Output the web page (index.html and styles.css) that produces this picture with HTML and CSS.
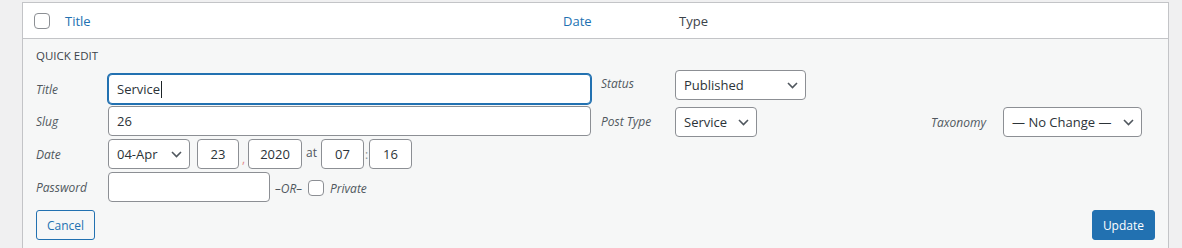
FILE: index.html
```html
<!DOCTYPE html>
<html lang="en">
<head>
    <meta charset="UTF-8">
    <title>Quick Edit</title>
    <link rel="stylesheet" href="styles.css">
</head>
<body>
    <div class="list-table">
        <!-- Column headers -->
        <div class="list-head">
            <div class="col-cb"><span class="checkbox"></span></div>
            <div class="col-title"><a href="#">Title</a></div>
            <div class="col-date"><a href="#">Date</a></div>
            <div class="col-type">Type</div>
        </div>

        <!-- Quick edit row -->
        <div class="quick-edit">
            <div class="qe-legend">Quick Edit</div>
            <div class="qe-cols">
                <div class="qe-col-left">
                    <div class="qe-row row-title">
                        <span class="qe-label">Title</span>
                        <div class="field field-wide focused">Service<span class="caret"></span></div>
                    </div>
                    <div class="qe-row row-slug">
                        <span class="qe-label">Slug</span>
                        <div class="field field-wide">26</div>
                    </div>
                    <div class="qe-row row-date">
                        <span class="qe-label">Date</span>
                        <div class="select sel-month"><span>04-Apr</span>
                            <svg width="11" height="7" viewBox="0 0 11 7"><path d="M1 1l4.5 4.5L10 1" fill="none" stroke="#50575e" stroke-width="1.6"/></svg>
                        </div>
                        <div class="field num num-day">23</div>
                        <span class="sep sep-comma">,</span>
                        <div class="field num num-year">2020</div>
                        <span class="sep sep-at">at</span>
                        <div class="field num num-hour">07</div>
                        <span class="sep sep-colon">:</span>
                        <div class="field num num-min">16</div>
                    </div>
                    <div class="qe-row row-pass">
                        <span class="qe-label">Password</span>
                        <div class="field field-pass"></div>
                        <span class="or">–OR–</span>
                        <span class="checkbox small"></span>
                        <span class="private">Private</span>
                    </div>
                </div>

                <div class="qe-col-center">
                    <div class="qe-row row-status">
                        <span class="qe-label wide">Status</span>
                        <div class="select sel-status"><span>Published</span>
                            <svg width="11" height="7" viewBox="0 0 11 7"><path d="M1 1l4.5 4.5L10 1" fill="none" stroke="#50575e" stroke-width="1.6"/></svg>
                        </div>
                    </div>
                    <div class="qe-row row-ptype">
                        <span class="qe-label wide">Post Type</span>
                        <div class="select sel-ptype"><span>Service</span>
                            <svg width="11" height="7" viewBox="0 0 11 7"><path d="M1 1l4.5 4.5L10 1" fill="none" stroke="#50575e" stroke-width="1.6"/></svg>
                        </div>
                    </div>
                </div>

                <div class="qe-col-right">
                    <div class="qe-row row-tax">
                        <span class="qe-label">Taxonomy</span>
                        <div class="select sel-tax"><span>— No Change —</span>
                            <svg width="11" height="7" viewBox="0 0 11 7"><path d="M1 1l4.5 4.5L10 1" fill="none" stroke="#50575e" stroke-width="1.6"/></svg>
                        </div>
                    </div>
                </div>
            </div>

            <div class="qe-actions">
                <button class="button">Cancel</button>
                <button class="button button-primary">Update</button>
            </div>
        </div>
    </div>
</body>
</html>
```

FILE: styles.css
```css
* {
    box-sizing: border-box;
    margin: 0;
    padding: 0;
}

body {
    background: #f0f0f1;
    font-family: 'Segoe UI', 'Open Sans', sans-serif;
    font-size: 12px;
    color: #3c434a;
}

.list-table {
    margin: 2px 0 0 22px;
    width: 1147px;
    height: 246px;
    overflow: hidden;
    background: #f6f7f7;
    border: 1px solid #c3c4c7;
    border-bottom: none;
}

/* header */

.list-head {
    display: flex;
    align-items: center;
    height: 36px;
    background: #fff;
    border-bottom: 1px solid #c3c4c7;
    font-size: 13px;
}

.list-head a {
    color: #2271b1;
    text-decoration: none;
}

.col-cb {
    width: 42px;
    padding-left: 11px;
    display: flex;
    align-items: center;
}

.col-title {
    width: 498px;
}

.col-date {
    width: 116px;
}

.col-type {
    color: #3c434a;
}

.checkbox {
    display: inline-block;
    width: 16px;
    height: 16px;
    border: 1px solid #8c8f94;
    border-radius: 4px;
    background: #fff;
}

/* quick edit */

.quick-edit {
    padding: 9px 12px 0 13px;
}

.qe-legend {
    font-size: 11.5px;
    line-height: 16px;
    text-transform: uppercase;
    color: #3c434a;
    margin-bottom: 6px;
}

.qe-cols {
    display: flex;
}

.qe-col-left {
    width: 555px;
    margin-right: 10px;
    padding-top: 4px;
}

.qe-col-center {
    width: 330px;
}

.qe-col-right {
    padding-top: 37px;
}

.qe-row {
    display: flex;
    align-items: center;
    height: 30px;
}

.row-slug {
    margin-top: 2px;
}

.row-date,
.row-pass {
    margin-top: 3px;
}

.row-ptype {
    margin-top: 7px;
}

.qe-label {
    width: 72px;
    flex-shrink: 0;
    font-style: italic;
    color: #50575e;
    padding-top: 1px;
}

.qe-label.wide {
    width: 74px;
    padding-top: 0;
    margin-top: -3px;
}

.row-ptype .qe-label.wide {
    margin-top: -2px;
}

.field,
.select {
    height: 30px;
    border: 1px solid #8c8f94;
    border-radius: 4px;
    background: #fff;
    color: #2c3338;
    font-size: 13px;
    display: flex;
    align-items: center;
    padding: 0 8px;
}

.field-wide {
    width: 483px;
}

.field.focused {
    border-color: #2271b1;
    box-shadow: 0 0 0 1px #2271b1;
}

.caret {
    display: inline-block;
    width: 1px;
    height: 17px;
    background: #1d2327;
    margin-left: 1px;
}

.select {
    justify-content: space-between;
    padding: 0 7px 0 8px;
}

.select svg {
    flex-shrink: 0;
}

.sel-month {
    width: 82px;
}

.sel-status {
    width: 131px;
}

.sel-ptype {
    width: 82px;
}

.sel-tax {
    width: 139px;
}

.num {
    justify-content: center;
    padding: 0;
}

.num-day {
    width: 42px;
    margin-left: 7px;
}

.num-year {
    width: 54px;
}

.num-hour {
    width: 43px;
}

.num-min {
    width: 43px;
}

.sep {
    color: #8c8f94;
    font-size: 12px;
}

.sep-comma {
    width: 9px;
    text-align: center;
    color: #d63638;
    opacity: 0.6;
    padding-top: 8px;
}

.sep-at {
    width: 19px;
    text-align: center;
    color: #50575e;
    margin-top: -4px;
}

.sep-colon {
    width: 5px;
    text-align: center;
}

.field-pass {
    width: 162px;
}

.or {
    font-style: italic;
    color: #50575e;
    margin-left: 5px;
    margin-top: 2px;
}

.checkbox.small {
    margin-left: 6px;
    margin-top: 1px;
}

.private {
    font-style: italic;
    color: #50575e;
    margin-left: 6px;
    margin-top: 2px;
}

/* buttons */

.qe-actions {
    display: flex;
    justify-content: space-between;
    margin-top: 8px;
}

.button {
    height: 30px;
    padding: 0 10px;
    border: 1px solid #2271b1;
    border-radius: 3px;
    background: #f6f7f7;
    color: #2271b1;
    font-family: 'Segoe UI', 'Open Sans', sans-serif;
    font-size: 12px;
    cursor: pointer;
}

.button-primary {
    background: #2271b1;
    color: #fff;
    margin-right: 1px;
}
```
